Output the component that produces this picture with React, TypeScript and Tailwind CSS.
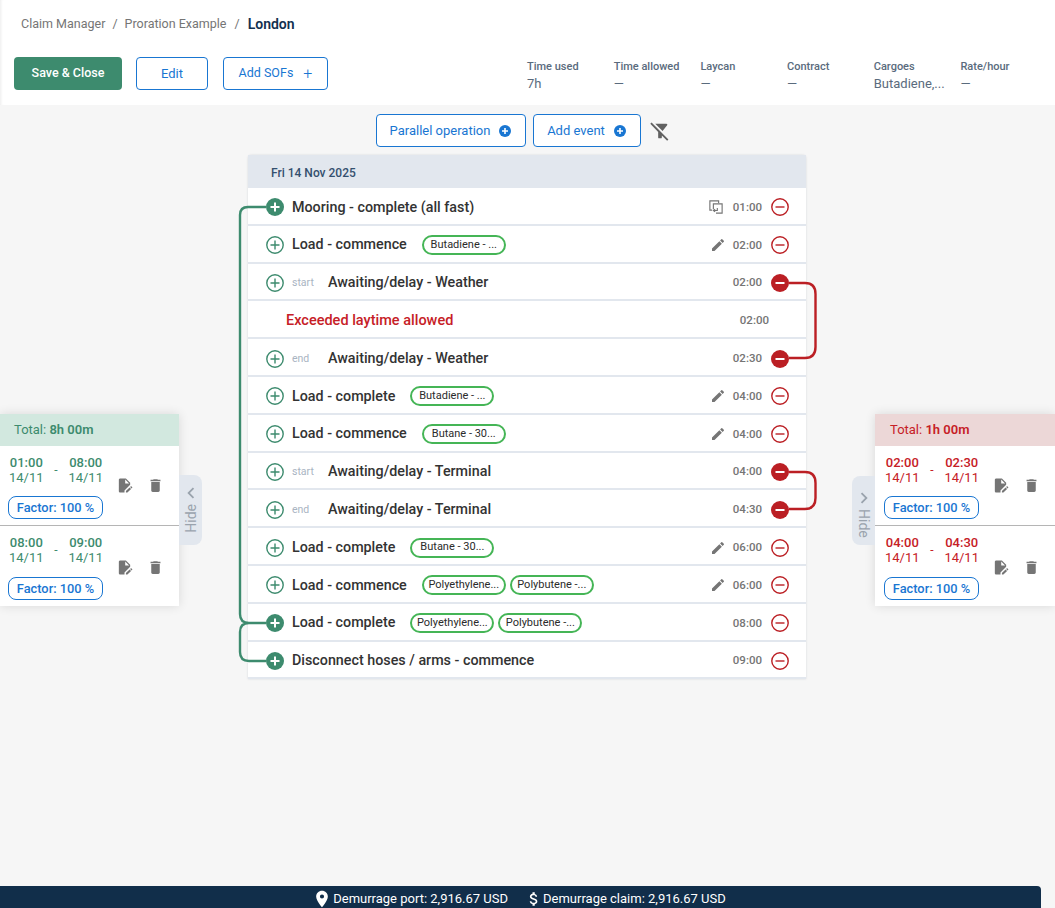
import React from "react";
import { MdChevronLeft, MdChevronRight, MdDelete, MdEdit, MdEditDocument, MdFilterAltOff, MdAttachMoney, MdLocationOn } from "react-icons/md";

type Row = {
  time: string;
  label: string;
  tag?: "start" | "end";
  chips?: string[];
  action?: "edit" | "copy";
  active?: boolean;
  overlap?: boolean;
  alert?: boolean;
};

const rows: Row[] = [
  { label: "Mooring - complete (all fast)", time: "01:00", action: "copy", active: true },
  { label: "Load - commence", time: "02:00", action: "edit", chips: ["Butadiene - ..."] },
  { label: "Awaiting/delay - Weather", time: "02:00", tag: "start", overlap: true },
  { label: "Exceeded laytime allowed", time: "02:00", alert: true },
  { label: "Awaiting/delay - Weather", time: "02:30", tag: "end", overlap: true },
  { label: "Load - complete", time: "04:00", action: "edit", chips: ["Butadiene - ..."] },
  { label: "Load - commence", time: "04:00", action: "edit", chips: ["Butane - 30..."] },
  { label: "Awaiting/delay - Terminal", time: "04:00", tag: "start", overlap: true },
  { label: "Awaiting/delay - Terminal", time: "04:30", tag: "end", overlap: true },
  { label: "Load - complete", time: "06:00", action: "edit", chips: ["Butane - 30..."] },
  { label: "Load - commence", time: "06:00", action: "edit", chips: ["Polyethylene...", "Polybutene -..."] },
  { label: "Load - complete", time: "08:00", active: true, chips: ["Polyethylene...", "Polybutene -..."] },
  { label: "Disconnect hoses / arms - commence", time: "09:00", active: true },
];

const stats = [
  { label: "Time used", value: "7h" },
  { label: "Time allowed", value: "—" },
  { label: "Laycan", value: "—" },
  { label: "Contract", value: "—" },
  { label: "Cargoes", value: "Butadiene,..." },
  { label: "Rate/hour", value: "—" },
];

const PlusDot = () => (
  <svg viewBox="0 0 14 14" className="w-[14px] h-[14px] ml-2">
    <circle cx="7" cy="7" r="6" fill="#1976d2" />
    <path d="M4 7h6M7 4v6" stroke="#fff" strokeWidth="1.6" />
  </svg>
);

const AddIcon = ({ solid }: { solid?: boolean }) => (
  <svg viewBox="0 0 18 18" className="w-[18px] h-[18px] shrink-0">
    <circle cx="9" cy="9" r={solid ? 9 : 8.2} fill={solid ? "#3d8b6e" : "#fff"} stroke="#3d8b6e" strokeWidth={solid ? 0 : 1.4} />
    <path d="M4.5 9h9M9 4.5v9" stroke={solid ? "#fff" : "#3d8b6e"} strokeWidth={solid ? 2 : 1.4} />
  </svg>
);

const RemoveIcon = ({ solid }: { solid?: boolean }) => (
  <svg viewBox="0 0 18 18" className="w-[18px] h-[18px] shrink-0">
    <circle cx="9" cy="9" r={solid ? 9 : 8.2} fill={solid ? "#bb1f24" : "#fff"} stroke="#bb1f24" strokeWidth={solid ? 0 : 1.4} />
    <path d="M4.5 9h9" stroke={solid ? "#fff" : "#bb1f24"} strokeWidth={solid ? 2 : 1.4} />
  </svg>
);

const CopyIcon = () => (
  <svg viewBox="0 0 16 16" className="w-[14px] h-[14px]" fill="none" stroke="#757575" strokeWidth="1.3">
    <path d="M3.5 11.5h-2.5v-10.5h10v2.5" />
    <path d="M8 15h7v-10.5h-10v6" />
    <path d="M5 12h4.5v-3M7 10.5l-2 1.5 2 1.5" />
  </svg>
);

function EventRow({ row }: { row: Row }) {
  if (row.alert) {
    return (
      <div className="h-[37.8px] pt-[3px] flex items-center border-b-2 border-[#e2e7ee] pl-[38px] pr-[37px]">
        <span className="text-[14.5px] font-medium text-[#c62026]">{row.label}</span>
        <span className="ml-auto text-[11.5px] font-medium text-[#757575]">{row.time}</span>
      </div>
    );
  }
  return (
    <div className="h-[37.8px] pt-[3px] flex items-center border-b-2 border-[#e2e7ee] pl-[18px] pr-[17px]">
      <AddIcon solid={row.active} />
      {row.tag ? (
        <>
          <span className="ml-2 w-[36px] text-[10.5px] text-[#a9b4c2]">{row.tag}</span>
          <span className="text-[14.3px] font-medium text-[#333333]">{row.label}</span>
        </>
      ) : (
        <span className="ml-2 text-[14.3px] font-medium text-[#333333]">{row.label}</span>
      )}
      {row.chips && (
        <div className="flex gap-1 ml-[15px]">
          {row.chips.map((chip, i) => (
            <span
              key={i}
              className="w-[84px] h-[20px] flex items-center justify-center rounded-full border-2 border-[#45b556] text-[11px] text-[#2b2b2b] whitespace-nowrap"
            >
              {chip}
            </span>
          ))}
        </div>
      )}
      <div className="ml-auto flex items-center">
        {row.action === "edit" && <MdEdit className="w-[16px] h-[16px] text-[#757575] mr-[6px]" />}
        {row.action === "copy" && <span className="mr-[9px] flex"><CopyIcon /></span>}
        <span className="w-[30px] text-right text-[11.5px] font-medium text-[#757575]">{row.time}</span>
        <span className="ml-[9px] flex"><RemoveIcon solid={row.overlap} /></span>
      </div>
    </div>
  );
}

function PeriodEntry({ from, to, color, divider, inset }: { from: string; to: string; color: string; divider?: boolean; inset?: boolean }) {
  return (
    <div className={`h-[80px] pt-[9px] ${inset ? "pl-[9px]" : "pl-[8px]"} ${divider ? "border-b border-[#b5b5b5]" : ""}`}>
      <div className="flex items-start">
        <div className={`ml-[1px] w-[94px] flex justify-between items-center ${color}`}>
          <div className="text-center leading-[15px]">
            <div className="text-[13px] font-medium">{from}</div>
            <div className="text-[13px]">14/11</div>
          </div>
          <span className="text-[12px]">-</span>
          <div className="text-center leading-[15px]">
            <div className="text-[13px] font-medium">{to}</div>
            <div className="text-[13px]">14/11</div>
          </div>
        </div>
        <div className={`flex gap-[14px] ml-[13px] text-[#757575] ${divider ? "mt-[22px]" : "mt-[24px]"}`}>
          <MdEditDocument className="w-[17px] h-[17px]" />
          <MdDelete className="w-[17px] h-[17px]" />
        </div>
      </div>
      <div className={`w-[95px] h-[23px] flex items-center justify-center rounded-lg border border-[#1976d2] text-[12.8px] font-medium text-[#1976d2] bg-white ${divider ? "mt-[2px]" : "mt-[1px]"}`}>
        Factor: 100 %
      </div>
    </div>
  );
}

function Connectors() {
  return (
    <svg className="absolute inset-0 w-full h-full pointer-events-none" fill="none" strokeWidth="2.4">
      <path d="M266 207H248Q240 207 240 215V614Q240 623 249 623H266M266 623H249Q240 623 240 632V652Q240 661 249 661H266" stroke="#3d8b6e" />
      <path d="M789 283H805Q815.5 283 815.5 294V347Q815.5 358 805 358H789" stroke="#bb1f24" />
      <path d="M789 472H805Q815.5 472 815.5 483V498Q815.5 509 805 509H789" stroke="#bb1f24" />
    </svg>
  );
}

export default function App() {
  return (
    <div className="relative w-full min-h-[908px] flex flex-col overflow-hidden bg-[#f6f6f6] font-['Roboto',sans-serif]">
      <header className="h-[105px] bg-white pl-[14px] shadow-[inset_3px_0_3px_-2px_rgba(0,0,0,0.08)]">
        <nav className="h-[57px] flex items-center pl-[7px] pb-[8px] text-[12.5px] text-[#757575]">
          <span>Claim Manager</span>
          <span className="mx-[7px]">/</span>
          <span>Proration Example</span>
          <span className="mx-[8px]">/</span>
          <span className="text-[14px] font-semibold text-[#12304f]">London</span>
        </nav>
        <div className="flex items-start">
          <button className="w-[108px] h-[33px] rounded bg-[#3d8b6e] text-[12.5px] font-medium text-white">Save &amp; Close</button>
          <button className="ml-[14px] w-[72px] h-[33px] rounded border border-[#1976d2] text-[13px] text-[#1976d2]">Edit</button>
          <button className="ml-[15px] w-[105px] h-[33px] flex items-center justify-center rounded border border-[#1976d2] text-[12.5px] text-[#1976d2]">
            Add SOFs<span className="ml-[10px] text-[16px] font-light leading-none">+</span>
          </button>
          <div className="ml-[199px] mt-[1px] flex">
            {stats.map((s) => (
              <div key={s.label} className="w-[86.7px]">
                <div className="text-[11px] font-medium leading-[17px] text-[#5a6b7d]">{s.label}</div>
                <div className="text-[13px] leading-[18px] text-[#5a6b7d]">{s.value}</div>
              </div>
            ))}
          </div>
        </div>
      </header>

      <main className="flex-1 flex flex-col items-center">
        <div className="mt-[9px] mr-[8px] flex items-center">
          <button className="w-[150px] h-[33px] flex items-center justify-center rounded border border-[#1976d2] bg-white text-[13px] text-[#1976d2]">
            Parallel operation<PlusDot />
          </button>
          <button className="ml-[7px] w-[108px] h-[33px] flex items-center justify-center rounded border border-[#1976d2] bg-white text-[13px] text-[#1976d2]">
            Add event<PlusDot />
          </button>
          <MdFilterAltOff className="ml-[8px] w-[22px] h-[22px] text-[#616161]" />
        </div>

        <section className="mt-[8px] mr-[1px] w-[558px] rounded-t bg-white shadow-[0_0_2px_rgba(120,130,150,0.3)]">
          <div className="h-[33px] pl-[23px] pt-[2px] flex items-center bg-[#e2e7ee] text-[12px] font-medium text-[#34506e]">Fri 14 Nov 2025</div>
          {rows.map((row, i) => (
            <EventRow key={i} row={row} />
          ))}
        </section>
      </main>

      <footer className="w-[1041px] h-[22px] pt-[3px] pr-[3px] flex items-center justify-center gap-[17px] rounded-tr bg-[#112e4a] text-[13px] text-white">
        <span className="flex items-center gap-[1px]"><MdLocationOn className="w-[20px] h-[20px]" />Demurrage port: 2,916.67 USD</span>
        <span className="flex items-center"><MdAttachMoney className="w-[18px] h-[18px]" />Demurrage claim: 2,916.67 USD</span>
      </footer>

      <Connectors />

      <aside className="absolute left-0 top-[414px] w-[179px] bg-white shadow-[0_0_10px_rgba(0,0,0,0.12)]">
        <div className="h-[32px] pl-[14px] flex items-center bg-[#d2e8df] text-[13px] text-[#3d8b6e]">
          Total:&nbsp;<span className="font-semibold">8h 00m</span>
        </div>
        <PeriodEntry from="01:00" to="08:00" color="text-[#3d8b6e]" divider />
        <PeriodEntry from="08:00" to="09:00" color="text-[#3d8b6e]" />
      </aside>
      <button className="absolute left-[179px] top-[475px] w-[23px] h-[70px] flex flex-col items-center justify-start pt-[7px] rounded-r-lg bg-[#e2e7ee] text-[#9aa3ad]">
        <MdChevronLeft className="w-[22px] h-[22px] shrink-0" />
        <span className="[writing-mode:vertical-rl] rotate-180 text-[14px] leading-none">Hide</span>
      </button>

      <aside className="absolute right-0 top-[414px] w-[180px] bg-white shadow-[0_0_10px_rgba(0,0,0,0.12)]">
        <div className="h-[32px] pl-[15px] flex items-center bg-[#ecd7d7] text-[13px] text-[#c62026]">
          Total:&nbsp;<span className="font-semibold">1h 00m</span>
        </div>
        <PeriodEntry from="02:00" to="02:30" color="text-[#c62026]" divider inset />
        <PeriodEntry from="04:00" to="04:30" color="text-[#c62026]" inset />
      </aside>
      <button className="absolute left-[852px] top-[476px] w-[23px] h-[69px] flex flex-col items-center justify-start pt-[11px] rounded-l-lg bg-[#e2e7ee] text-[#9aa3ad]">
        <MdChevronRight className="w-[22px] h-[22px] shrink-0" />
        <span className="[writing-mode:vertical-rl] text-[14px] leading-none">Hide</span>
      </button>
    </div>
  );
}
